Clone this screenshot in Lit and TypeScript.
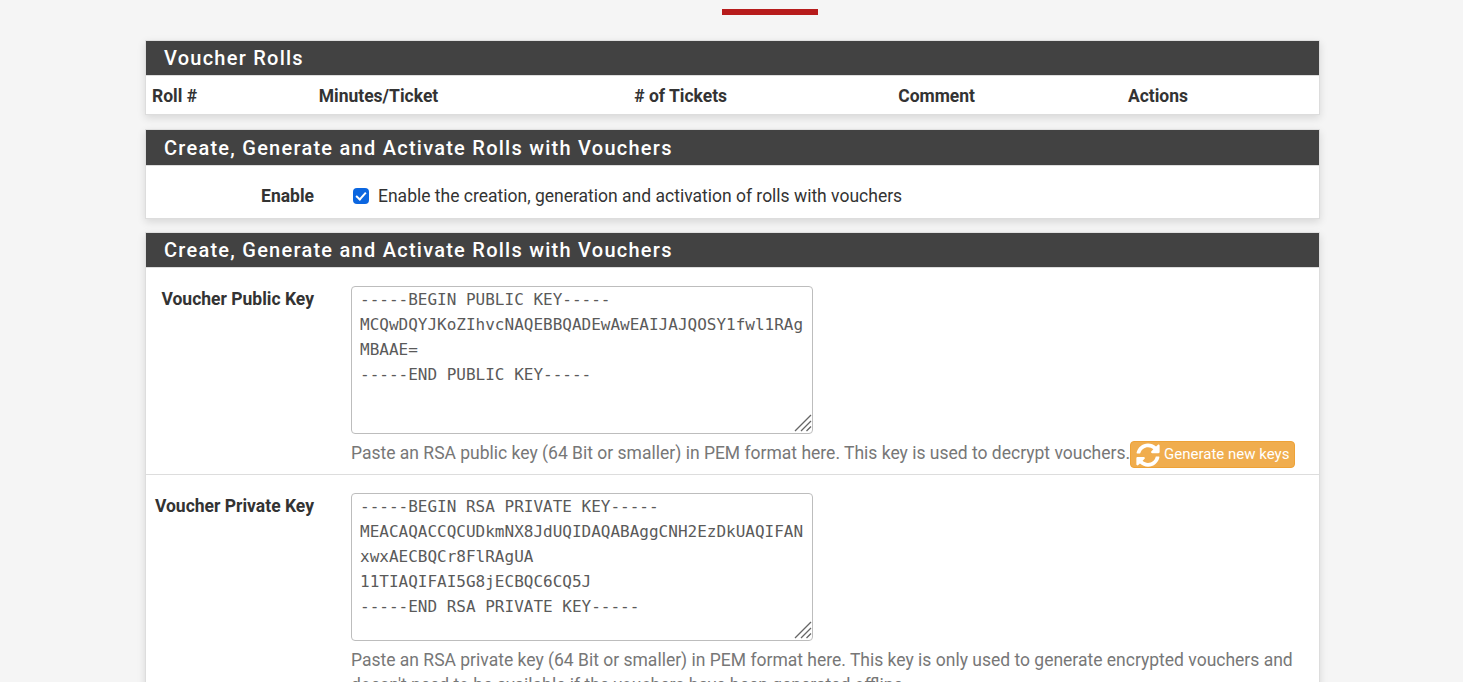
import { LitElement, html, css } from 'lit';
import { customElement } from 'lit/decorators.js';

const PUBLIC_KEY = `-----BEGIN PUBLIC KEY-----
MCQwDQYJKoZIhvcNAQEBBQADEwAwEAIJAJQOSY1fwl1RAg
MBAAE=
-----END PUBLIC KEY-----`;

const PRIVATE_KEY = `-----BEGIN RSA PRIVATE KEY-----
MEACAQACCQCUDkmNX8JdUQIDAQABAggCNH2EzDkUAQIFAN
xwxAECBQCr8FlRAgUA
11TIAQIFAI5G8jECBQC6CQ5J
-----END RSA PRIVATE KEY-----`;

const SYNC_ICON = html`<svg class="icon" viewBox="0 0 512 512" aria-hidden="true">
  <path fill="currentColor" d="M370.72 133.28C339.458 104.008 298.888 87.962 255.848 88c-77.458.068-144.328 53.178-162.791 126.85-1.344 5.363-6.122 9.15-11.651 9.15H24.103c-7.498 0-13.194-6.807-11.807-14.176C33.933 94.924 134.813 8 256 8c66.448 0 126.791 26.136 171.315 68.685L463.03 40.97C478.149 25.851 504 36.559 504 57.941V192c0 13.255-10.745 24-24 24H345.941c-21.382 0-32.09-25.851-16.971-40.971l41.75-41.749zM32 296h134.059c21.382 0 32.09 25.851 16.971 40.971l-41.75 41.75c31.262 29.273 71.835 45.319 114.876 45.28 77.418-.07 144.315-53.144 162.787-126.849 1.344-5.363 6.122-9.15 11.651-9.15h57.304c7.498 0 13.194 6.807 11.807 14.176C478.067 417.076 377.187 504 256 504c-66.448 0-126.791-26.136-171.315-68.685L48.97 471.03C33.851 486.149 8 475.441 8 454.059V320c0-13.255 10.745-24 24-24z"/>
</svg>`;

const GRIP = html`<svg class="grip" viewBox="0 0 18 18" aria-hidden="true">
  <path d="M1 17 17 1M7 17 17 7M12.5 17 17 12.5" stroke="#666" stroke-width="1.3" fill="none"/>
</svg>`;

@customElement('app-root')
export class AppRoot extends LitElement {
  static styles = css`
    :host {
      display: block;
      height: 682px;
      overflow: hidden;
      background: #f5f5f5;
      color: #333;
      font-family: Roboto, sans-serif;
      font-size: 17.5px;
    }
    .nav {
      display: flex;
      padding: 9px 0 25px 722px;
    }
    .nav-mark {
      width: 96px;
      height: 6px;
      background: #b71c1c;
    }
    .page {
      width: 1175px;
      margin-left: 145px;
      display: flex;
      flex-direction: column;
    }
    .panel {
      background: #fff;
      border: 1px solid #ddd;
      border-top-color: #e0e0e0;
      box-shadow: 0 3px 8px rgba(0, 0, 0, 0.12);
      margin-bottom: 14px;
    }
    .panel.tight {
      margin-bottom: 13px;
    }
    .panel-title {
      margin: 0;
      height: 34px;
      line-height: 34px;
      padding: 0 18px;
      background: #424242;
      color: #fff;
      font-size: 20px;
      font-weight: 500;
      letter-spacing: 1.25px;
    }
    .panel-title.tall {
      height: 35px;
      line-height: 36px;
    }
    .table-head {
      display: grid;
      grid-template-columns: 166.7px 315.5px 264px 229.7px 1fr;
      height: 38px;
      line-height: 40px;
      padding-left: 6px;
      font-weight: 700;
      border-top: 1px solid #ddd;
    }
    .row {
      display: grid;
      grid-template-columns: 168px 1fr;
      column-gap: 37px;
      border-top: 1px solid #ddd;
    }
    .row > label {
      font-weight: 700;
      text-align: right;
    }
    .enable {
      box-sizing: border-box;
      height: 53px;
      padding-top: 8px;
      align-items: center;
    }
    .check {
      display: flex;
      align-items: center;
      gap: 9px;
    }
    .check input {
      appearance: none;
      position: relative;
      width: 16px;
      height: 16px;
      margin: 0 0 0 2px;
      border-radius: 4px;
      background: #0b66e0;
    }
    .check input::after {
      content: '';
      position: absolute;
      left: 5px;
      top: 2px;
      width: 4px;
      height: 8px;
      border: solid #fff;
      border-width: 0 2px 2px 0;
      transform: rotate(42deg);
    }
    .key-row {
      padding: 18px 0 6px;
    }
    .key-row > label {
      line-height: 26px;
    }
    .key-box {
      position: relative;
      width: 462px;
      height: 148px;
    }
    .grip {
      position: absolute;
      right: 1px;
      bottom: 2px;
      width: 18px;
      height: 18px;
      pointer-events: none;
    }
    textarea {
      display: block;
      box-sizing: border-box;
      width: 100%;
      height: 100%;
      padding: 0 8px;
      border: 1px solid #bdbdbd;
      border-radius: 4px;
      color: #5a5a5a;
      background: #fff;
      font-family: 'DejaVu Sans Mono', monospace;
      font-size: 16px;
      line-height: 25px;
      overflow: hidden;
      white-space: pre;
      resize: none;
      outline: none;
    }
    .help {
      margin: 7px 0 0;
      padding-right: 15px;
      color: #777;
      line-height: 25px;
    }
    .btn {
      display: inline-flex;
      align-items: center;
      gap: 4px;
      height: 27px;
      box-sizing: border-box;
      padding: 0 5px;
      vertical-align: middle;
      background: #f0ad4e;
      border: 1px solid #eea236;
      border-radius: 4px;
      color: #fff;
      font-family: Roboto, sans-serif;
      font-size: 15px;
      line-height: 20px;
    }
    .btn span {
      margin-top: -2px;
    }
    .icon {
      width: 24px;
      height: 24px;
    }
  `;

  render() {
    return html`
      <div class="nav"><div class="nav-mark"></div></div>
      <div class="page">
        <section class="panel">
          <h2 class="panel-title">Voucher Rolls</h2>
          <div class="table-head">
            <span>Roll #</span>
            <span>Minutes/Ticket</span>
            <span># of Tickets</span>
            <span>Comment</span>
            <span>Actions</span>
          </div>
        </section>

        <section class="panel tight">
          <h2 class="panel-title tall">Create, Generate and Activate Rolls with Vouchers</h2>
          <div class="row enable">
            <label>Enable</label>
            <div class="check">
              <input type="checkbox" checked />
              <span>Enable the creation, generation and activation of rolls with vouchers</span>
            </div>
          </div>
        </section>

        <section class="panel">
          <h2 class="panel-title">Create, Generate and Activate Rolls with Vouchers</h2>
          <div class="row key-row">
            <label>Voucher Public Key</label>
            <div>
              <div class="key-box">
                <textarea readonly .value=${PUBLIC_KEY}></textarea>
                ${GRIP}
              </div>
              <p class="help">
                Paste an RSA public key (64 Bit or smaller) in PEM format here. This key is used to
                decrypt vouchers.<button class="btn">${SYNC_ICON}<span>Generate new keys</span></button>
              </p>
            </div>
          </div>
          <div class="row key-row">
            <label>Voucher Private Key</label>
            <div>
              <div class="key-box">
                <textarea readonly .value=${PRIVATE_KEY}></textarea>
                ${GRIP}
              </div>
              <p class="help">
                Paste an RSA private key (64 Bit or smaller) in PEM format here. This key is only
                used to generate encrypted vouchers and doesn't need to be available if the vouchers
                have been generated offline.
              </p>
            </div>
          </div>
        </section>
      </div>
    `;
  }
}
